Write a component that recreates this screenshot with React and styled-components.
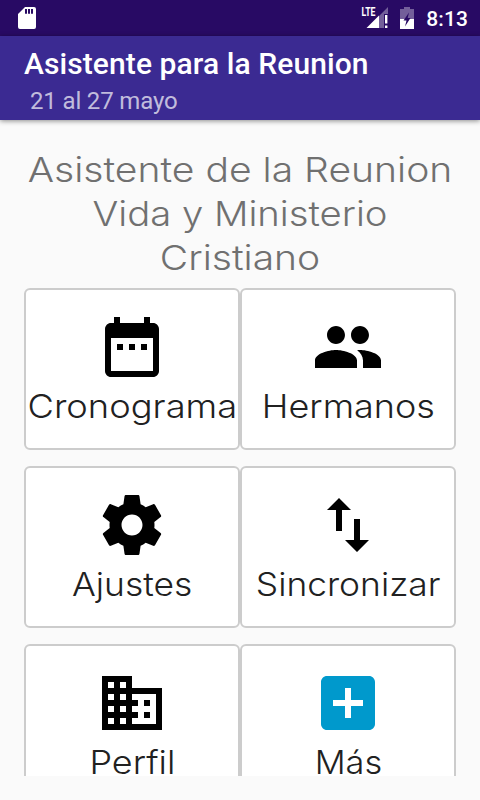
import styled, { createGlobalStyle } from 'styled-components';

const GlobalStyle = createGlobalStyle`
	* {
		box-sizing: border-box;
	}

	body {
		margin: 0;
		background-color: #fafafa;
		font-family: Roboto, sans-serif;
	}
`;

const Screen = styled.div`
	display: flex;
	flex-direction: column;
	height: 800px;
	overflow: hidden;
`;

const StatusBar = styled.div`
	display: flex;
	flex: none;
	align-items: center;
	justify-content: space-between;
	height: 36px;
	padding: 0 12px 0 18px;
	background-color: #280a64;
	color: white;

	svg {
		display: block;
		overflow: visible;
	}
`;

const StatusIcons = styled.div`
	display: flex;
	align-items: center;
	gap: 12px;
`;

const Clock = styled.span`
	padding-top: 2px;
	font-size: 21px;
	font-weight: 500;
	line-height: 36px;
	letter-spacing: 0.1px;
`;

const AppBar = styled.header`
	flex: none;
	height: 84px;
	padding: 10px 24px 0;
	background-color: #3b2a92;
	box-shadow: 0 1px 5px rgba(0, 0, 0, 0.45);
`;

const Title = styled.h1`
	margin: 0;
	color: white;
	font-size: 30px;
	font-weight: 500;
	line-height: 36px;
	letter-spacing: 0.09px;
	white-space: nowrap;
`;

const Subtitle = styled.p`
	margin: 0 0 0 6px;
	color: rgba(255, 255, 255, 0.7);
	font-size: 24px;
	line-height: 38px;
	letter-spacing: -0.15px;
`;

const Main = styled.main`
	flex: none;
	height: 656px;
	padding: 27px 24px 0;
	overflow: hidden;
`;

const Heading = styled.h2`
	margin: 0 0 9px;
	color: #707070;
	font-family: Inter, sans-serif;
	font-size: 34.6px;
	font-weight: 350;
	line-height: 44px;
	text-align: center;
	white-space: nowrap;
`;

const HeadingLine = styled.span`
	display: block;
	transform: scaleX(${({ $stretch }) => $stretch});
`;

const Grid = styled.div`
	display: grid;
	grid-template-columns: 1fr 1fr;
	row-gap: 16px;
`;

const Card = styled.button`
	display: flex;
	flex-direction: column;
	align-items: center;
	height: 162px;
	padding: 21px 0 0;
	border: 2px solid #ccc;
	border-radius: 6px;
	background-color: white;

	svg {
		flex: none;
		width: 72px;
		height: 72px;
		fill: ${({ $color }) => $color || 'black'};
	}
`;

const CardLabel = styled.span`
	color: #212121;
	font-family: Inter, sans-serif;
	font-size: 33px;
	font-weight: 300;
	line-height: 46px;
	transform: scaleX(${({ $stretch }) => $stretch});
	white-space: nowrap;
`;

const StatusLabel = styled.text`
	font-family: Roboto, sans-serif;
	font-size: 12px;
	font-weight: 700;
`;

const headingLines = [
	{ text: 'Asistente de la Reunion', stretch: 1.13 },
	{ text: 'Vida y Ministerio', stretch: 1.106 },
	{ text: 'Cristiano', stretch: 1.128 },
];

const items = [
	{
		label: 'Cronograma',
		stretch: 1.1,
		path: 'M9 11H7v2h2v-2zm4 0h-2v2h2v-2zm4 0h-2v2h2v-2zm2-7h-1V2h-2v2H8V2H6v2H5c-1.11 0-1.99.9-1.99 2L3 20c0 1.1.89 2 2 2h14c1.1 0 2-.9 2-2V6c0-1.1-.9-2-2-2zm0 16H5V9h14v11z',
	},
	{
		label: 'Hermanos',
		stretch: 1.09,
		path: 'M16 11c1.66 0 2.99-1.34 2.99-3S17.66 5 16 5c-1.66 0-3 1.34-3 3s1.34 3 3 3zm-8 0c1.66 0 2.99-1.34 2.99-3S9.66 5 8 5C6.34 5 5 6.34 5 8s1.34 3 3 3zm0 2c-2.33 0-7 1.17-7 3.5V19h14v-2.5c0-2.33-4.67-3.5-7-3.5zm8 0c-.29 0-.62.02-.97.05 1.16.84 1.97 1.97 1.97 3.45V19h6v-2.5c0-2.33-4.67-3.5-7-3.5z',
	},
	{
		label: 'Ajustes',
		stretch: 1.073,
		path: 'M19.43 12.98c.04-.32.07-.64.07-.98s-.03-.66-.07-.98l2.11-1.65c.19-.15.24-.42.12-.64l-2-3.46c-.12-.22-.39-.3-.61-.22l-2.49 1c-.52-.4-1.08-.73-1.69-.98l-.38-2.65C14.46 2.18 14.25 2 14 2h-4c-.25 0-.46.18-.49.42l-.38 2.65c-.61.25-1.17.59-1.69.98l-2.49-1c-.23-.09-.49 0-.61.22l-2 3.46c-.13.22-.07.49.12.64l2.11 1.65c-.04.32-.07.65-.07.98s.03.66.07.98l-2.11 1.65c-.19.15-.24.42-.12.64l2 3.46c.12.22.39.3.61.22l2.49-1c.52.4 1.08.73 1.69.98l.38 2.65c.03.24.24.42.49.42h4c.25 0 .46-.18.49-.42l.38-2.65c.61-.25 1.17-.59 1.69-.98l2.49 1c.23.09.49 0 .61-.22l2-3.46c.12-.22.07-.49-.12-.64l-2.11-1.65zM12 15.5c-1.93 0-3.5-1.57-3.5-3.5s1.57-3.5 3.5-3.5 3.5 1.57 3.5 3.5-1.57 3.5-3.5 3.5z',
	},
	{
		label: 'Sincronizar',
		stretch: 1.072,
		path: 'M9 3L5 6.99h3V14h2V6.99h3L9 3zm7 14.01V10h-2v7.01h-3L15 21l4-3.99h-3z',
	},
	{
		label: 'Perfil',
		stretch: 1.09,
		path: 'M12 7V3H2v18h20V7H12zM6 19H4v-2h2v2zm0-4H4v-2h2v2zm0-4H4V9h2v2zm0-4H4V5h2v2zm4 12H8v-2h2v2zm0-4H8v-2h2v2zm0-4H8V9h2v2zm0-4H8V5h2v2zm10 12h-8v-2h2v-2h-2v-2h2v-2h-2V9h8v10zm-2-8h-2v2h2v-2zm0 4h-2v2h2v-2z',
	},
	{
		label: 'Más',
		stretch: 1.04,
		color: '#0099cc',
		path: 'M19 3H5c-1.11 0-2 .9-2 2v14c0 1.1.89 2 2 2h14c1.1 0 2-.9 2-2V5c0-1.1-.9-2-2-2zm-2 10h-4v4h-2v-4H7v-2h4V7h2v4h4v2z',
	},
];

const SdCardIcon = () => (
	<svg width='18' height='22' viewBox='0 0 18 22' fill='white'>
		<path
			fillRule='evenodd'
			d='M7 0h9a2 2 0 0 1 2 2v18a2 2 0 0 1-2 2H2a2 2 0 0 1-2-2V7zM7 2v4.7h2V2zM10 2v4.7h2V2zM13 2v4.7h2V2z'
		/>
	</svg>
);

const SignalIcon = () => (
	<svg width='27' height='22' viewBox='0 0 27 22' fill='white'>
		<path d='M27 0v7h-4v14h-5V9z' opacity='0.35' />
		<path d='M18 8.5V21H5.5z' />
		<path d='M24 8h2.4v8.5H24zM24 18.4h2.4v2.6H24z' />
		<StatusLabel x='0.5' y='9' textLength='14' lengthAdjust='spacingAndGlyphs'>
			LTE
		</StatusLabel>
	</svg>
);

const BatteryIcon = () => (
	<svg width='14' height='22' viewBox='0 0 14 22' fill='white'>
		<path d='M4 0h6v2h4v10H0V2h4z' opacity='0.35' />
		<path d='M0 12h14v10H0z' />
		<path d='M9 5.5L3.5 13.5h3l-1.5 6L10.5 11H7.7z' fill='#280a64' />
	</svg>
);

const App = () => {
	return (
		<Screen>
			<GlobalStyle />
			<StatusBar>
				<SdCardIcon />
				<StatusIcons>
					<SignalIcon />
					<BatteryIcon />
					<Clock>8:13</Clock>
				</StatusIcons>
			</StatusBar>
			<AppBar>
				<Title>Asistente para la Reunion</Title>
				<Subtitle>21 al 27 mayo</Subtitle>
			</AppBar>
			<Main>
				<Heading>
					{headingLines.map(({ text, stretch }) => (
						<HeadingLine key={text} $stretch={stretch}>
							{text}
						</HeadingLine>
					))}
				</Heading>
				<Grid>
					{items.map(({ label, stretch, color, path }) => (
						<Card key={label} $color={color}>
							<svg viewBox='0 0 24 24'>
								<path d={path} />
							</svg>
							<CardLabel $stretch={stretch}>{label}</CardLabel>
						</Card>
					))}
				</Grid>
			</Main>
		</Screen>
	);
};

export default App;
